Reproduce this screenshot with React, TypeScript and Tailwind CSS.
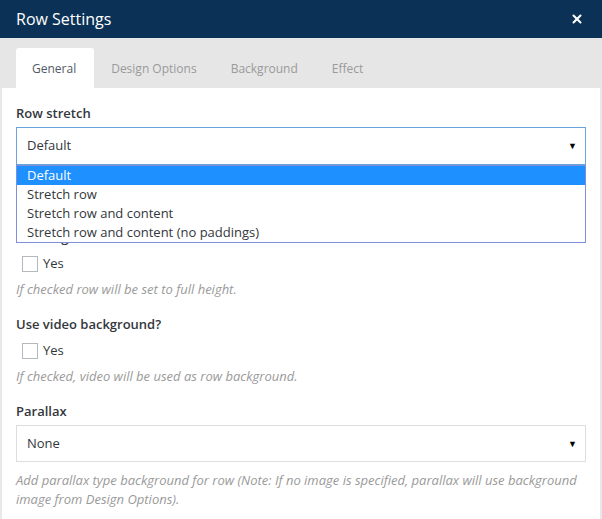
import { X } from "lucide-react";

const TABS = ["General", "Design Options", "Background", "Effect"];
const STRETCH = [
  "Default",
  "Stretch row",
  "Stretch row and content",
  "Stretch row and content (no paddings)",
];

function Check() {
  return (
    <label className="flex items-center gap-[5px] pl-[6px] h-[20px] text-[13px] text-[#32373c]">
      <span className="w-4 h-4 border border-[#b4b9be] bg-white shrink-0" />
      Yes
    </label>
  );
}

function Help({ children }: { children: React.ReactNode }) {
  return <p className="text-[13px] italic leading-[19px] text-[#9a9a9a]">{children}</p>;
}

export default function App() {
  return (
    <div
      className="w-[602px] h-[519px] overflow-hidden bg-white"
      style={{ fontFamily: '"Open Sans", sans-serif' }}
    >
      {/* header */}
      <div className="h-[38px] bg-[#0b3256] flex items-center justify-between pl-4 pr-[18px]">
        <h1 className="text-white text-[16px]">Row Settings</h1>
        <X size={14} strokeWidth={3.5} className="text-white" />
      </div>

      {/* tabs */}
      <div className="h-[50px] bg-[#e6e6e6] flex items-end pl-4">
        {TABS.map((t, i) => (
          <div
            key={t}
            className={
              i === 0
                ? "h-[40px] pl-4 pr-[18px] pt-[2px] flex items-center bg-white rounded-t-[3px] text-[12px] text-[#4f5a65]"
                : "h-[40px] px-[17px] pt-[2px] flex items-center text-[12px] text-[#9a9a9a]"
            }
          >
            {t}
          </div>
        ))}
      </div>

      {/* body */}
      <div className="h-[431px] border-x-2 border-[#e8e8e8] px-[14px] pt-[15px]">
        {/* row stretch */}
        <div className="relative">
          <p className="text-[13px] font-semibold leading-[20px] text-[#32373c]">Row stretch</p>
          <div className="mt-[4px] h-[38px] border border-[#6aa4dd] flex items-center justify-between pl-[10px] pr-[8px] text-[13px] text-[#32373c]">
            Default
            <span className="text-[9px] text-black">▼</span>
          </div>
          <div className="h-[62px]" />
          <div className="absolute left-0 right-0 top-[62px] z-10 bg-white border border-[#7e8fdb]">
            {STRETCH.map((o, i) => (
              <div
                key={o}
                className={
                  i === 0
                    ? "h-[19px] flex items-center pl-[10px] text-[13px] bg-[#1e90ff] text-white"
                    : "h-[19px] flex items-center pl-[10px] text-[13px] text-[#32373c]"
                }
              >
                {o}
              </div>
            ))}
          </div>
        </div>

        {/* full height */}
        <div>
          <p className="text-[13px] font-semibold leading-[20px] text-[#32373c]">Full height row?</p>
          <div className="mt-[7px]">
            <Check />
          </div>
          <div className="mt-[6px]">
            <Help>If checked row will be set to full height.</Help>
          </div>
        </div>

        {/* video */}
        <div className="mt-[15px]">
          <p className="text-[13px] font-semibold leading-[20px] text-[#32373c]">Use video background?</p>
          <div className="mt-[7px]">
            <Check />
          </div>
          <div className="mt-[6px]">
            <Help>If checked, video will be used as row background.</Help>
          </div>
        </div>

        {/* parallax */}
        <div className="mt-[15px]">
          <p className="text-[13px] font-semibold leading-[20px] text-[#32373c]">Parallax</p>
          <div className="mt-[4px] h-[37px] border border-[#dddddd] flex items-center justify-between pl-[10px] pr-[8px] text-[13px] text-[#32373c]">
            None
            <span className="text-[9px] text-black">▼</span>
          </div>
          <div className="mt-[9px] pr-[6px]">
            <Help>
              Add parallax type background for row (Note: If no image is specified, parallax will use background
              image from Design Options).
            </Help>
          </div>
        </div>
      </div>
    </div>
  );
}
